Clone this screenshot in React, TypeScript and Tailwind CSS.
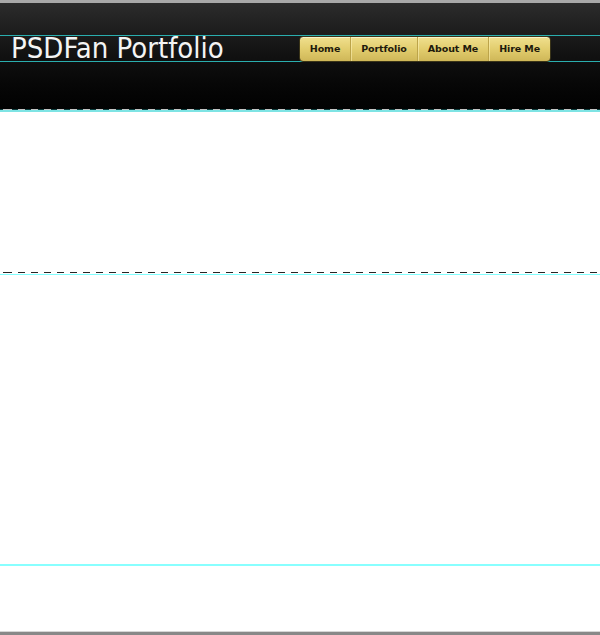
const navItems = ['Home', 'Portfolio', 'About Me', 'Hire Me']

function Dashes({ color, bg }: { color: string; bg: string }) {
  return (
    <div
      className={`h-px w-full ${bg}`}
      style={{
        backgroundImage: `repeating-linear-gradient(90deg, ${color} 0 7px, transparent 7px 13px)`,
        backgroundPosition: '5px 0',
      }}
    />
  )
}

function Nav() {
  return (
    <nav className="flex h-[26px] items-stretch rounded-[4px] border border-[#3a3418] bg-gradient-to-b from-[#f0e08e] via-[#e2cd6e] to-[#cfb758] shadow-[inset_0_1px_0_rgba(255,255,240,0.6)]">
      {navItems.map((item, i) => (
        <div key={item} className="flex items-stretch">
          {i > 0 && <div className="w-px bg-[#bca44a] shadow-[1px_0_0_rgba(255,245,190,0.5)]" />}
          <a className="flex items-center px-[10px] font-['DejaVu_Sans',sans-serif] text-[9.5px] font-bold tracking-[-0.1px] text-[#1e1a0c]">
            {item}
          </a>
        </div>
      ))}
    </nav>
  )
}

export default function App() {
  return (
    <div className="flex h-[635px] w-[600px] flex-col overflow-hidden bg-white">
      <div className="h-[3px] bg-[#a9a9a9]" />
      <header className="h-[106px] bg-gradient-to-b from-[#2c2c2c] via-[#111111] to-[#020202] pt-[32px]">
        <div className="h-px bg-[#2aaeae]" />
        <div className="flex h-[25px] items-start">
          <h1 className="ml-[11px] mt-[-3px] font-['Liberation_Sans_Narrow','DejaVu_Sans_Condensed',sans-serif] text-[29px] leading-[31px] font-normal text-[#f4f4f4]">
            PSDFan Portfolio
          </h1>
          <div className="ml-auto mr-[49px] mt-0">
            <Nav />
          </div>
        </div>
        <div className="h-px bg-[#2aaeae]" />
      </header>
      <Dashes color="#c4c4c4" bg="bg-[#0c3c3c]" />
      <div className="h-[2px] bg-[#7ee4e4]" />
      <div className="h-[160px]" />
      <Dashes color="#262626" bg="bg-white" />
      <div className="h-px bg-white" />
      <div className="h-px bg-[#80ffff]" />
      <div className="h-[289px]" />
      <div className="h-[2px] bg-[#88ffff]" />
      <div className="flex-1" />
      <div className="h-px bg-[#d6d6d6]" />
      <div className="h-[3px] bg-[#888888]" />
    </div>
  )
}
